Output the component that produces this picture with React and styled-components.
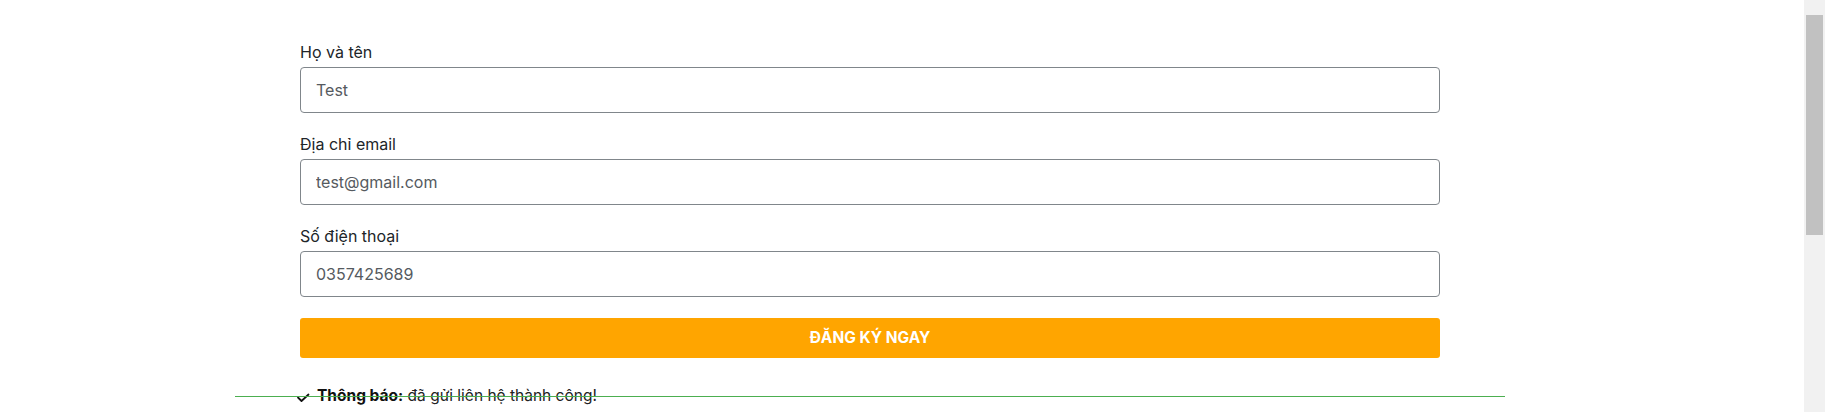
import React from "react";
import styled, { createGlobalStyle } from "styled-components";

const Global = createGlobalStyle`
  html, body { margin: 0; padding: 0; background: #fff; overflow: hidden; }
  body { font-family: Inter, "Noto Sans", sans-serif; color: #212529; }
  * { box-sizing: border-box; }
`;

const Page = styled.div`
  display: flex;
  width: 1825px;
  height: 412px;
  overflow: hidden;
`;

const Main = styled.main`
  flex: 1;
  padding: 40px 0 0 300px;
`;

const Form = styled.form`
  width: 1140px;
  display: flex;
  flex-direction: column;
`;

const Field = styled.div`
  display: flex;
  flex-direction: column;
  margin-bottom: 19px;
`;

const Label = styled.label`
  font-size: 16px;
  line-height: 24px;
  color: #212529;
  margin-bottom: 3px;
`;

const Input = styled.input`
  height: 46px;
  padding: 10px 15px;
  font: 16px/24px Inter, "Noto Sans", sans-serif;
  color: #555a60;
  border: 1px solid #80868b;
  border-radius: 4px;
  background: #fff;
  outline: none;
`;

const Button = styled.button`
  margin-top: 2px;
  height: 40px;
  border: none;
  border-radius: 3px;
  background: #ffa500;
  color: #fff;
  font: 700 15.5px/24px Inter, "Noto Sans", sans-serif;
  text-transform: uppercase;
`;

const Notice = styled.div`
  position: relative;
  margin: 26px 0 0 -4px;
  display: flex;
  align-items: center;
  gap: 7px;
  font-size: 15.5px;
  line-height: 24px;
  color: #111;
  &::after {
    content: "";
    position: absolute;
    left: -61px;
    width: 1270px;
    top: 12px;
    height: 1px;
    background: #4caf50;
  }
`;

const Bold = styled.strong`
  font-weight: 700;
`;

const Msg = styled.span`
  color: #222;
`;

const Track = styled.div`
  width: 21px;
  height: 412px;
  background: #f1f1f1;
  padding: 15px 2px 0 2px;
`;

const Thumb = styled.div`
  width: 17px;
  height: 220px;
  background: #c1c1c1;
`;

const CheckIcon = styled.svg`
  flex: none;
  margin-top: 1px;
`;

const Check = () => (
  <CheckIcon width="14" height="14" viewBox="0 0 14 14" fill="none">
    <polyline points="2,7.5 5.5,11 12.5,4.5" stroke="#111" strokeWidth="1.8" strokeLinecap="round" strokeLinejoin="round" />
  </CheckIcon>
);

export default function App() {
  return (
    <>
      <Global />
      <Page>
        <Main>
          <Form onSubmit={(e) => e.preventDefault()}>
            <Field>
              <Label>Họ và tên</Label>
              <Input defaultValue="Test" />
            </Field>
            <Field>
              <Label>Địa chỉ email</Label>
              <Input defaultValue="test@gmail.com" />
            </Field>
            <Field>
              <Label>Số điện thoại</Label>
              <Input defaultValue="0357425689" />
            </Field>
            <Button type="submit">Đăng ký ngay</Button>
            <Notice>
              <Check />
              <span>
                <Bold>Thông báo:</Bold> <Msg>đã gửi liên hệ thành công!</Msg>
              </span>
            </Notice>
          </Form>
        </Main>
        <Track>
          <Thumb />
        </Track>
      </Page>
    </>
  );
}
